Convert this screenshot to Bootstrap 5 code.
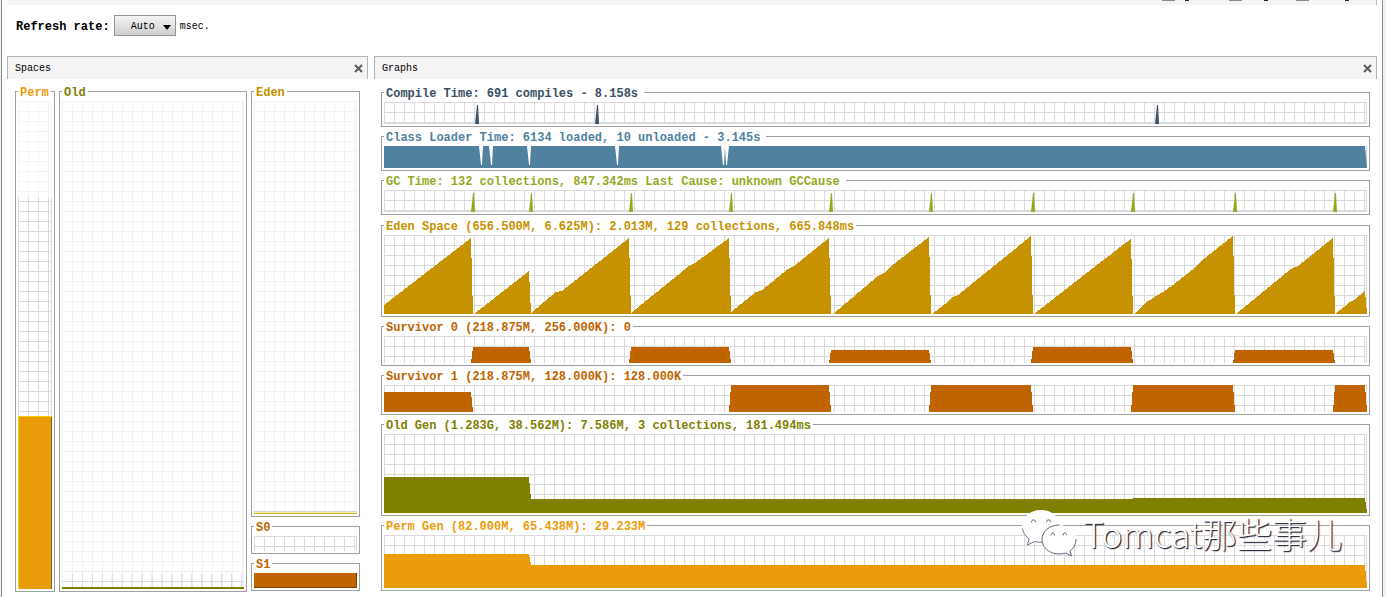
<!DOCTYPE html>
<html lang="en">
<head>
<meta charset="utf-8">
<meta name="viewport" content="width=device-width, initial-scale=1">
<title>Visual GC</title>
<link href="https://cdn.jsdelivr.net/npm/bootstrap@5.3.0/dist/css/bootstrap.min.css" rel="stylesheet">
<style>
:root{--compile:#3a5064;--loader:#5082a0;--gc:#96a91e;--eden:#c79200;--survivor:#c06400;--old:#808000;--perm:#eb9c0b}
body{background:#f0f0f0;color:#000;font:10px/14px "Liberation Mono","Noto Sans CJK SC",monospace}
.window{min-height:100vh;margin:0 3px 0 1px;padding:0 5px;border:solid #8c8c8c;border-width:0 1px;background:#fff;overflow:hidden}
.topstrip{height:5px;background:#f4f4f4;border-right:1px solid #bbb}
.topstrip svg{display:block;margin-right:27px}
.toolbar{height:51px;padding:10px 9px 0;gap:4px}
.toolbar .rate-label{font-size:12px;line-height:24px}
.toolbar .unit{line-height:24px}
.rate{width:62px}
.rate select{width:100%;height:21px;appearance:none;border:1px solid #949494;border-radius:0;background:linear-gradient(#f4f4f4,#e2e2e2 50%,#cdcdcd);font:inherit;color:#000;padding:2px 0 0 16px}
.rate svg{right:5px;top:10px;pointer-events:none}
.panels{display:grid;grid-template-columns:361fr 1003fr;gap:6px}
.panel-head{height:23px;padding:0 4px 0 7px;background:#f4f4f4;border:solid #b4b4b4;border-width:1px 1px 0}
.panel-head h2{font-size:10px;line-height:22px;font-weight:400;margin:0;padding-top:2px}
.panel-head button{border:0;background:none;padding:0;line-height:0}
.spaces{display:grid;grid-template-columns:40px 188fr 109fr;gap:4px;padding:6px 8px 0}
.graphs{display:flex;flex-direction:column;gap:4px;padding:7px 7px 0}
.stack{display:flex;flex-direction:column;gap:3px}
fieldset{min-width:0;border:1px solid #a0a0a0;padding:4px 2px 2px}
legend{float:none;width:auto;margin:0;padding:0 2px;font-size:12px;line-height:16px;height:12px;font-weight:700;white-space:nowrap}
.times legend{padding-right:6px}
.plot{--line:#dadadd;position:relative;overflow:hidden;background:
 linear-gradient(var(--line),var(--line)) right/1px 100% no-repeat,
 repeating-linear-gradient(90deg,var(--line) 0 1px,transparent 1px 10px),
 repeating-linear-gradient(var(--line) 0 1px,transparent 1px 10px)}
.plot svg{display:block;width:100%;height:100%}
.faint{--line:#f2f2f2}
.h-time{height:22px}.h-surv{height:27px}.h-gen{height:79px}.h-perm{height:53px}
.times .plot{box-shadow:inset 0 -2px #dadada}
.h-full{height:488px}.h-eden{height:413px}.h-s{height:15px}
.c-compile{color:var(--compile)}.c-loader{color:var(--loader)}.c-gc{color:var(--gc)}.c-eden{color:var(--eden)}
.c-survivor{color:var(--survivor)}.c-old{color:var(--old)}.c-perm{color:var(--perm)}
.watermark{right:40px;bottom:40px;height:48px;gap:6px;color:#fff;font:300 35px/48px "Noto Sans CJK SC",sans-serif;text-shadow:1px 1px 1px #2c2c3c,1px 1px 1px #55556a;white-space:nowrap}
</style>
<script src="https://cdn.jsdelivr.net/npm/bootstrap@5.3.0/dist/js/bootstrap.bundle.min.js"></script>
</head>
<body>
<main class="window position-relative">
  <div class="topstrip d-flex justify-content-end">
    <svg width="187" height="3" aria-hidden="true"><path d="M0 0h13v1H0zM67 0h13v1H67zM134 0h13v1h-13z" fill="#8a8a8a"/><path d="M23 0h4v1h-4zM102 0h4v1h-4zM183 0h4v1h-4z" fill="#222"/></svg>
  </div>

  <form class="toolbar d-flex align-items-start">
    <label class="rate-label fw-bold" for="rate">Refresh rate:</label>
    <div class="rate position-relative">
      <select id="rate"><option>Auto</option><option>100</option><option>500</option><option>1000</option></select>
      <svg class="position-absolute" width="8" height="5"><path d="M0 0h8L4 5z"/></svg>
    </div>
    <span class="unit">msec.</span>
  </form>

  <div class="panels">
    <section>
      <header class="panel-head d-flex align-items-center justify-content-between">
        <h2>Spaces</h2>
        <button type="button" aria-label="Close Spaces"><svg width="9" height="9"><path d="M1 1l7 7M8 1L1 8" stroke="#5c5c5c" stroke-width="2"/></svg></button>
      </header>
      <div class="spaces">
        <fieldset><legend class="c-perm">Perm</legend>
          <div class="plot h-full"><svg viewBox="0 0 34 488" preserveAspectRatio="none" shape-rendering="crispEdges">
            <path d="M0 0h34v97H0z" fill="#fff" opacity=".7"/>
            <path d="M0 315h34v173H0z" fill="#eb9c0b"/><path d="M0 315h34v1H1v172H0z" fill="#f0d000"/><path d="M33 316h1v172h-1z" fill="#7a6010"/></svg></div>
        </fieldset>
        <fieldset><legend class="c-old">Old</legend>
          <div class="plot faint h-full"><svg viewBox="0 0 183 488" preserveAspectRatio="none" shape-rendering="crispEdges">
            <path d="M0 480.500h183M10.500 473v13M20.500 473v13M30.500 473v13M40.500 473v13M50.500 473v13M60.500 473v13M70.500 473v13M80.500 473v13M90.500 473v13M100.500 473v13M110.500 473v13M120.500 473v13M130.500 473v13M140.500 473v13M150.500 473v13M160.500 473v13M170.500 473v13M180.500 473v13" stroke="#dadadd"/>
            <path d="M0 486h183v2H0z" fill="#808000"/></svg></div>
        </fieldset>
        <div class="stack">
          <fieldset><legend class="c-eden">Eden</legend>
            <div class="plot faint h-eden"><svg viewBox="0 0 104 413" preserveAspectRatio="none" shape-rendering="crispEdges">
              <path d="M0 410h104v1H0z" fill="#d4d4d8"/><path d="M0 411h104v1H0z" fill="#fff3b0"/><path d="M0 412h104v1H0z" fill="#dcb020"/></svg></div>
          </fieldset>
          <fieldset><legend class="c-survivor">S0</legend><div class="plot h-s"></div></fieldset>
          <fieldset><legend class="c-survivor">S1</legend>
            <div class="plot h-s"><svg viewBox="0 0 104 15" preserveAspectRatio="none" shape-rendering="crispEdges">
              <path d="M0 0h104v15H0z" fill="#c06400"/><path d="M0 14h103V0h1v15H0z" fill="#7c4000"/></svg></div>
          </fieldset>
        </div>
      </div>
    </section>

    <section>
      <header class="panel-head d-flex align-items-center justify-content-between">
        <h2>Graphs</h2>
        <button type="button" aria-label="Close Graphs"><svg width="9" height="9"><path d="M1 1l7 7M8 1L1 8" stroke="#5c5c5c" stroke-width="2"/></svg></button>
      </header>
      <div class="graphs">
        <div class="stack times">
          <fieldset><legend class="c-compile">Compile Time: 691 compiles - 8.158s</legend>
            <div class="plot h-time c-compile"><svg viewBox="0 0 983 22" preserveAspectRatio="none" fill="currentColor">
              <path d="M91 22L93 3h1L95 22zM211 22L213 3h1L215 22zM771 22L773 3h1L775 22z"/></svg></div>
          </fieldset>
          <fieldset><legend class="c-loader">Class Loader Time: 6134 loaded, 10 unloaded - 3.145s</legend>
            <div class="plot h-time c-loader"><svg viewBox="0 0 983 22" preserveAspectRatio="none" fill="currentColor">
              <path d="M0 0H981L983 22H0z"/><path fill="#fff" d="M95 0h4L98 19H97zM105 0h4L108 19h-1zM143 0h4L146 19h-1zM231 0h4L234 19h-1zM337 0h4L340 19h-1zM341 0h4L343 19h-1z"/></svg></div>
          </fieldset>
          <fieldset><legend class="c-gc">GC Time: 132 collections, 847.342ms Last Cause: unknown GCCause</legend>
            <div class="plot h-time c-gc"><svg viewBox="0 0 983 22" preserveAspectRatio="none" fill="currentColor">
              <path d="M87 22L89 3h1L91 22zM145 22L147 3h1L149 22zM245 22L247 3h1L249 22zM345 22L347 3h1L349 22zM445 22L447 3h1L449 22zM545 22L547 3h1L549 22zM647 22L649 3h1L651 22zM747 22L749 3h1L751 22zM849 22L851 3h1L853 22zM949 22L951 3h1L953 22z"/></svg></div>
          </fieldset>
        </div>
        <div class="stack">
          <fieldset><legend class="c-eden">Eden Space (656.500M, 6.625M): 2.013M, 129 collections, 665.848ms</legend>
            <div class="plot h-gen c-eden"><svg viewBox="0 0 983 79" preserveAspectRatio="none" fill="currentColor" shape-rendering="crispEdges">
              <path d="M0 79V70L87 3 89 79zM90 79L145 36 147 79zM147 79V78L172 57 178 56 245 3 247 79zM247 79V78L305 31 311 28 345 3 347 79zM347 79V77L372 57 378 55 404 34 410 31 445 3 447 79zM449 79L494 41 500 38 506 32 545 2 547 79zM548 79L561 69 567 63 574 60 647 1 649 79zM650 79L718 26 725 21 736 12 747 4 749 79zM751 79L761 68 782 55 789 50 808 35 816 27 831 15 849 1 851 79zM852 79L907 34 914 31 949 3 951 79zM951 79L960 72 966 67 970 65 981 56 983 79z"/></svg></div>
          </fieldset>
          <fieldset><legend class="c-survivor">Survivor 0 (218.875M, 256.000K): 0</legend>
            <div class="plot h-surv c-survivor"><svg viewBox="0 0 983 27" preserveAspectRatio="none" fill="currentColor" shape-rendering="crispEdges">
              <path d="M87 27L89 11H145L147 27zM245 27L247 11H345L347 27zM445 27L447 14H545L547 27zM647 27L649 11H747L749 27zM849 27L851 14H949L951 27z"/></svg></div>
          </fieldset>
          <fieldset><legend class="c-survivor">Survivor 1 (218.875M, 128.000K): 128.000K</legend>
            <div class="plot h-surv c-survivor"><svg viewBox="0 0 983 27" preserveAspectRatio="none" fill="currentColor" shape-rendering="crispEdges">
              <path d="M0 27V7H87L89 27zM345 27L347 0H445L447 27zM545 27L547 0H647L649 27zM747 27L749 0H849L851 27zM949 27L951 0H981L983 27z"/></svg></div>
          </fieldset>
          <fieldset><legend class="c-old">Old Gen (1.283G, 38.562M): 7.586M, 3 collections, 181.494ms</legend>
            <div class="plot h-gen c-old"><svg viewBox="0 0 983 79" preserveAspectRatio="none" fill="currentColor" shape-rendering="crispEdges">
              <path d="M0 79V43H145L147 65H749V64H981L983 79z"/></svg></div>
          </fieldset>
          <fieldset><legend class="c-perm">Perm Gen (82.000M, 65.438M): 29.233M</legend>
            <div class="plot h-perm c-perm"><svg viewBox="0 0 983 53" preserveAspectRatio="none" fill="currentColor" shape-rendering="crispEdges">
              <path d="M0 53V19H145L147 30H981L983 53z"/></svg></div>
          </fieldset>
        </div>
      </div>
    </section>
  </div>

  <div class="watermark position-absolute d-flex align-items-center">
    <svg width="56" height="48" viewBox="0 0 56 48" fill="#fff" stroke-linecap="round" stroke-linejoin="round">
      <path d="M20 1C9 1 1 8.500 1 17.500c0 5.500 3 9.500 7 12.500L6.500 36l7-3.500c2.500.7 5 1 8 .8C31 33 39 26 39 17.500 39 8.500 31 1 20 1z"/>
      <path d="M1.500 20c.8 4.500 3.500 7.500 6.500 10L6.500 36l7-3.500c2.500.7 4.500.9 7 .9" fill="none" stroke="#77778a"/>
      <path d="M38 16c-9.500 0-17 6.500-17 14.500S28.500 45 38 45c2.500 0 4.500-.4 6.500-1l6 3-1.500-5c3.500-2.700 6-6.700 6-11.500C55 22.500 47.500 16 38 16z"/>
      <path d="M38 16c-9.500 0-17 6.500-17 14.500S28.500 45 38 45c2.500 0 4.500-.4 6.500-1l6 3-1.500-5c3.500-2.700 6-6.700 6-11.500" fill="none" stroke="#66667a"/>
      <path d="M10.500 13c0-3 4-3 4 0M25.500 13c0-3 4-3 4 0M30 26c0-3 3.500-3 3.500 0M42 26c0-3 3.500-3 3.500 0" fill="none" stroke="#55556a"/>
    </svg>
    <span>Tomcat那些事儿</span>
  </div>
</main>
</body>
</html>
